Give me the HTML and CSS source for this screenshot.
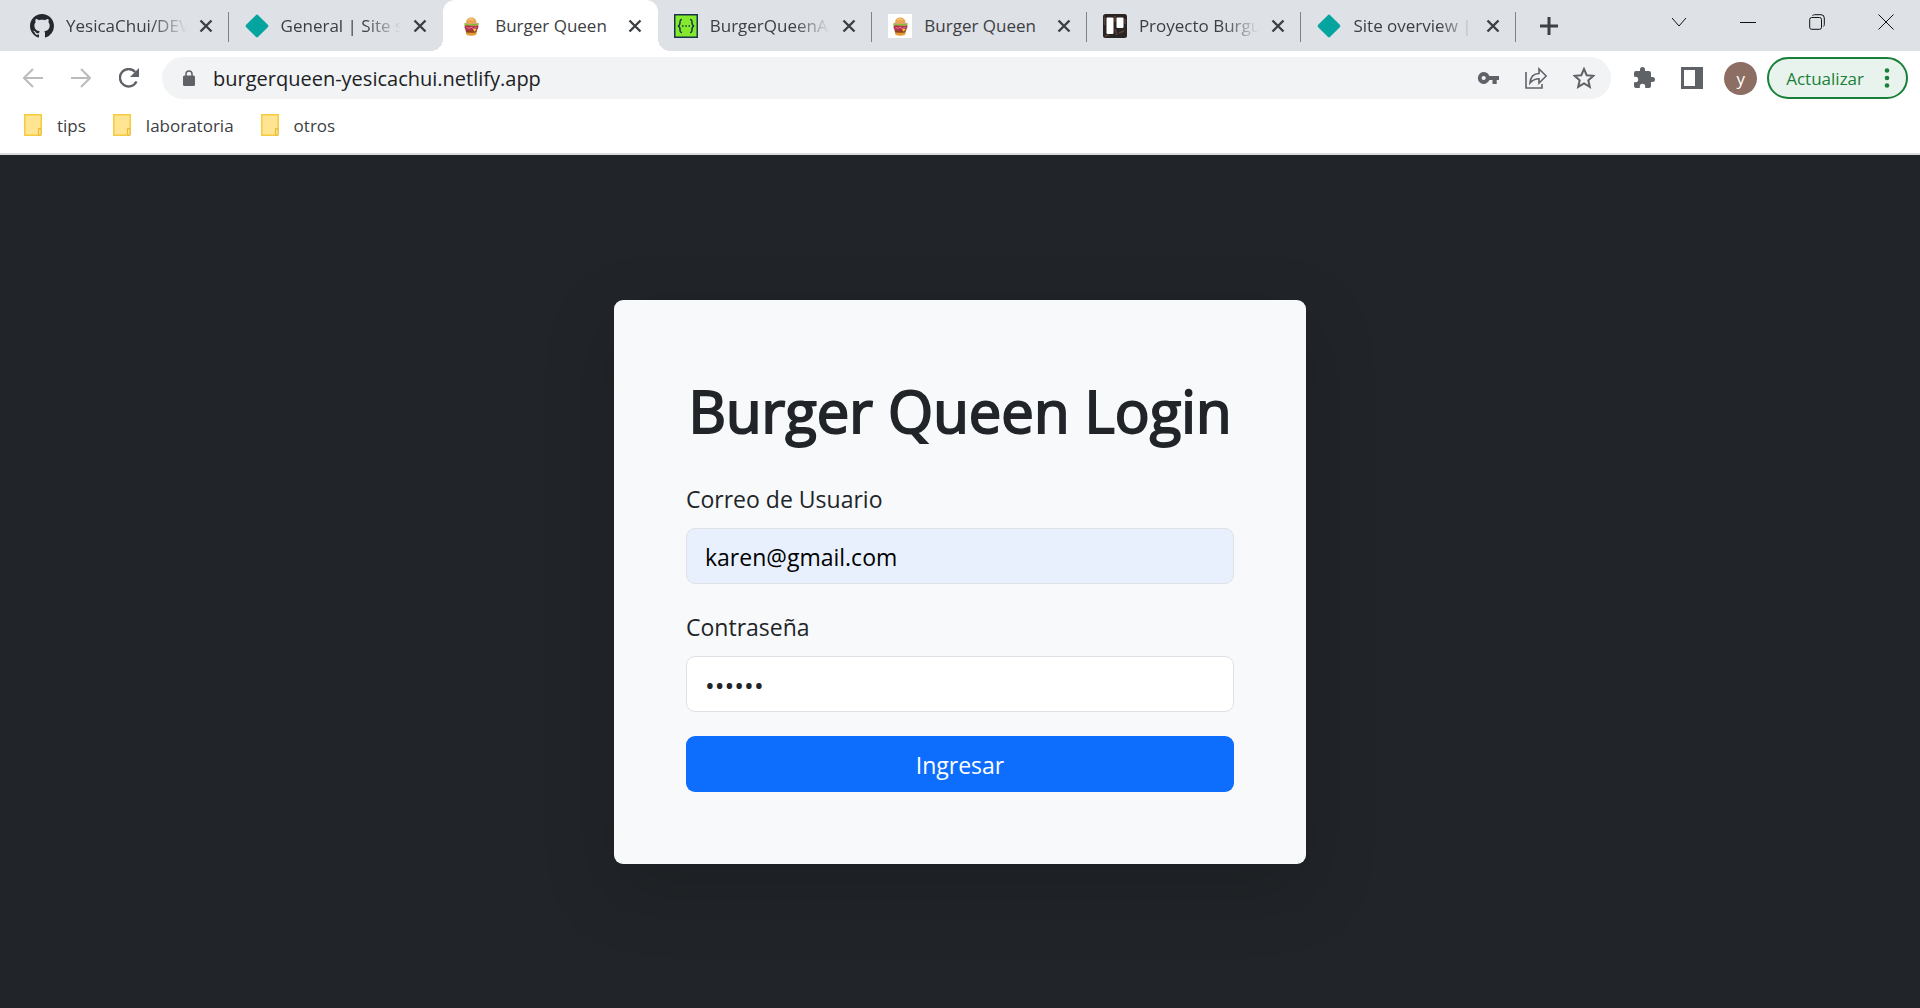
FILE: index.html
```html
<!DOCTYPE html>
<html lang="es">
<head>
<meta charset="utf-8">
<title>Burger Queen</title>
<meta name="viewport" content="width=device-width, initial-scale=1">
<link rel="stylesheet" href="styles.css">
</head>
<body>
<svg class="sprite" aria-hidden="true">
  <symbol id="close" viewBox="0 0 14 14"><path d="M1.5 1.5l11 11M12.500 1.500l-11 11" stroke="#3c4043" stroke-width="2.400" fill="none"/></symbol>
  <symbol id="netlify" viewBox="0 0 24 24"><path d="M10.800 1.200q1.200-1.200 2.400 0l9.600 9.600q1.200 1.200 0 2.400l-9.600 9.600q-1.200 1.200-2.400 0l-9.600-9.600q-1.200-1.200 0-2.400z" fill="#05a49f"/></symbol>
  <symbol id="burger" viewBox="0 0 24 24">
    <rect width="24" height="24" fill="#fff"/>
    <path d="M7 17.500h10.500v2q-.3 2.200-5.200 2.200t-5.300-2.200z" fill="#e59a35"/>
    <path d="M6.500 16h11.500l-.5 2.300q-5 1-10.500 0z" fill="#8f4517"/>
    <path d="M6 9.500h13l.5 3.500-1.500 3.500-11 .3-1.500-3z" fill="#b33350"/>
    <path d="M5.500 8.500l2 1.300 9.500.4 2.500-1.700v2.500l-2.500 1-9.500-.8-2 .8z" fill="#8cc53e"/>
    <path d="M7.500 13.200l2.500 1.300 2-1.300 2.500 1.300 3-1" stroke="#e87990" fill="none"/>
    <path d="M14 15h3.500l-1.700 2.800z" fill="#ffd42e"/>
    <path d="M7 8.700c0-6.800 10.500-6.800 10.500 0q-5.200 2-10.500 0z" fill="#e9a850"/>
    <path d="M9.500 6q3-2 5 0" stroke="#f9d58c" fill="none"/>
  </symbol>
  <symbol id="folder" viewBox="0 0 18 22"><path d="M.75.750h16.500v14.500h-2.500v6H.750z" fill="#ffe591" stroke="#f5cc41" stroke-width="1.500"/><rect x="14.500" y="14.500" width="2.750" height="6.750" rx="1" fill="#ffe591" stroke="#e9bd37" stroke-width="1.300"/></symbol>
</svg>

<header class="browser">
  <nav class="strip" aria-label="Pestañas">
    <div class="tabs">
      <div class="tab">
        <svg class="favicon" viewBox="0 0 16 16"><path fill="#24292f" d="M8 0C3.580 0 0 3.580 0 8c0 3.540 2.290 6.530 5.470 7.590.4.070.550-.170.550-.380 0-.190-.010-.820-.010-1.490-2.010.370-2.530-.490-2.690-.940-.090-.230-.480-.940-.820-1.130-.280-.150-.680-.520-.010-.530.630-.010 1.080.580 1.230.820.720 1.210 1.870.870 2.330.660.070-.520.280-.870.510-1.070-1.780-.200-3.640-.890-3.640-3.950 0-.870.310-1.590.820-2.150-.080-.200-.360-1.020.080-2.120 0 0 .670-.210 2.200.820.640-.180 1.320-.270 2-.270s1.360.090 2 .270c1.530-1.040 2.200-.820 2.200-.820.440 1.100.160 1.920.080 2.120.510.560.820 1.270.820 2.150 0 3.070-1.870 3.750-3.650 3.950.290.250.540.730.540 1.480 0 1.070-.010 1.930-.010 2.200 0 .210.150.460.550.380A8.010 8.010 0 0 0 16 8c0-4.420-3.580-8-8-8z"/></svg>
        <a class="title" href="#">YesicaChui/DEV005</a>
        <button class="close" aria-label="Cerrar"><svg><use href="#close"/></svg></button>
      </div>
      <div class="tab plain">
        <svg class="favicon"><use href="#netlify"/></svg>
        <a class="title" href="#">General | Site settings</a>
        <button class="close" aria-label="Cerrar"><svg><use href="#close"/></svg></button>
      </div>
      <div class="tab active">
        <svg class="favicon"><use href="#burger"/></svg>
        <a class="title whole" href="#">Burger Queen</a>
        <button class="close" aria-label="Cerrar"><svg><use href="#close"/></svg></button>
      </div>
      <div class="tab">
        <svg class="favicon" viewBox="0 0 24 24"><rect x=".75" y=".75" width="22.500" height="22.500" fill="#85ea2d" stroke="#173647" stroke-width="1.500"/><path d="M8 5.500c-2 0-2 1-2 3s0 3-2 3.500c2 .5 2 1.500 2 3.500s0 3 2 3M16 5.500c2 0 2 1 2 3s0 3 2 3.500c-2 .5-2 1.500-2 3.500s0 3-2 3M8 12h1.500M11.300 12h1.500M14.500 12h1.500" fill="none" stroke="#173647" stroke-width="1.500"/></svg>
        <a class="title" href="#">BurgerQueenAPI</a>
        <button class="close" aria-label="Cerrar"><svg><use href="#close"/></svg></button>
      </div>
      <div class="tab">
        <svg class="favicon"><use href="#burger"/></svg>
        <a class="title whole" href="#">Burger Queen</a>
        <button class="close" aria-label="Cerrar"><svg><use href="#close"/></svg></button>
      </div>
      <div class="tab">
        <svg class="favicon" viewBox="0 0 24 24"><rect width="24" height="24" rx="2.500" fill="#2a2423"/><path d="M2 22l4-1M12 2v6M21 17l-5 2M1.500 3v8M12 15l2 6M22 5v5" stroke="#5b4238" stroke-width="1.500"/><rect x="3.500" y="3.500" width="7" height="16.500" rx="1" fill="#fff"/><rect x="13.500" y="3.500" width="7" height="10.500" rx="1" fill="#fff"/></svg>
        <a class="title" href="#">Proyecto Burguer</a>
        <button class="close" aria-label="Cerrar"><svg><use href="#close"/></svg></button>
      </div>
      <div class="tab">
        <svg class="favicon"><use href="#netlify"/></svg>
        <a class="title" href="#">Site overview | burger</a>
        <button class="close" aria-label="Cerrar"><svg><use href="#close"/></svg></button>
      </div>
    </div>
    <button class="newtab" aria-label="Nueva pestaña"><svg viewBox="0 0 18 18"><path d="M9 0v18M0 9h18" stroke="#3c4043" stroke-width="3"/></svg></button>
    <div class="window">
      <button aria-label="Buscar pestañas"><svg viewBox="0 0 16 16"><path d="M1 4l7 8 7-8"/></svg></button>
      <button aria-label="Minimizar"><svg viewBox="0 0 16 16"><path d="M0 8.500h16"/></svg></button>
      <button aria-label="Restaurar"><svg viewBox="0 0 16 16"><rect x=".7" y="3.500" width="11.800" height="11.800" rx="2"/><path d="M3.500 1.700Q4 .7 5.500.700H12q3.300 0 3.300 3.300v6.500q0 1.500-1 2"/></svg></button>
      <button aria-label="Cerrar ventana"><svg viewBox="0 0 16 16"><path d="M.5.500l15 15M15.500.500l-15 15"/></svg></button>
    </div>
  </nav>

  <div class="toolbar">
    <div class="navigation">
      <button aria-label="Atrás"><svg viewBox="0 0 20 20"><path d="M20 10H1.500M10 1L1 10l9 9" fill="none" stroke="#b9bbbd" stroke-width="2"/></svg></button>
      <button aria-label="Adelante"><svg viewBox="0 0 20 20"><path d="M0 10h18.500M10 1l9 9-9 9" fill="none" stroke="#b9bbbd" stroke-width="2"/></svg></button>
      <button aria-label="Recargar"><svg viewBox="0 0 20 20"><path d="M17.500 13.500a8.700 8.700 0 1 1-1.300-9.500" fill="none" stroke="#5f6368" stroke-width="2.400"/><path d="M20 0v9h-9z" fill="#5f6368"/></svg></button>
    </div>
    <div class="omnibox">
      <svg class="lock" viewBox="0 0 12 16"><path d="M3 7V4a3 3 0 0 1 6 0v3" fill="none" stroke="#5f6368" stroke-width="1.500"/><rect y="5.500" width="12" height="10.500" rx="1.500" fill="#5f6368"/></svg>
      <input class="url" type="text" aria-label="Dirección" value="burgerqueen-yesicachui.netlify.app">
      <button aria-label="Contraseñas"><svg viewBox="0 0 22 22"><path d="M12.400 8.900A6 6 0 1 0 12.400 13.100h3.100v4h4.200v-4H22V8.900zM6.700 13.100a2.100 2.100 0 1 1 0-4.200 2.100 2.100 0 0 1 0 4.200z" fill="#5f6368"/></svg></button>
      <button aria-label="Compartir"><svg viewBox="0 0 22 22"><path d="M1 5v16h16v-4" fill="none" stroke="#5f6368" stroke-width="1.600"/><path d="M5 16c.5-6 3.500-9.500 9-9.500V2l7.200 7-7.200 7v-4.300c-4 0-6.500 1.300-9 4.300z" fill="none" stroke="#5f6368" stroke-width="1.600"/></svg></button>
      <button aria-label="Favoritos"><svg viewBox="0 0 22 22"><path d="M11 2l2.700 6.200 6.700.6-5.100 4.500 1.500 6.600L11 16.400l-5.800 3.500 1.500-6.600L1.600 8.800l6.700-.6z" fill="none" stroke="#5f6368" stroke-width="2"/></svg></button>
    </div>
    <div class="actions">
      <button aria-label="Extensiones"><svg viewBox="1 1 22 22"><path d="M20.500 11H19V7a2 2 0 0 0-2-2h-4V3.500a2.500 2.500 0 0 0-5 0V5H4a2 2 0 0 0-2 2v3.800h1.500a2.700 2.700 0 0 1 0 5.400H2V20a2 2 0 0 0 2 2h3.800v-1.500a2.700 2.700 0 0 1 5.400 0V22H17a2 2 0 0 0 2-2v-4h1.500a2.500 2.500 0 0 0 0-5z" fill="#5f6368"/></svg></button>
      <button aria-label="Panel lateral"><svg viewBox="0 0 22 22"><path d="M0 0h22v22H0zM3 3v16h11V3z" fill="#5f6368" fill-rule="evenodd"/></svg></button>
      <button class="avatar">y</button>
    </div>
    <button class="update">Actualizar<svg viewBox="0 0 6 20"><g fill="#188038"><circle cx="3" cy="2.500" r="2.300"/><circle cx="3" cy="10" r="2.300"/><circle cx="3" cy="17.500" r="2.300"/></g></svg></button>
  </div>

  <nav class="bookmarks" aria-label="Marcadores">
    <a href="#"><svg><use href="#folder"/></svg>tips</a>
    <a href="#"><svg><use href="#folder"/></svg>laboratoria</a>
    <a href="#"><svg><use href="#folder"/></svg>otros</a>
  </nav>
</header>

<main class="page">
  <form class="card">
    <h1>Burger Queen Login</h1>
    <label for="email">Correo de Usuario</label>
    <input class="field filled" id="email" type="email" value="karen@gmail.com">
    <label for="password">Contraseña</label>
    <input class="field secret" id="password" type="password" value="123456">
    <button class="submit" type="button">Ingresar</button>
  </form>
</main>
</body>
</html>
```
FILE: styles.css
```css
* { box-sizing: border-box; }

body {
  margin: 0;
  min-height: 100vh;
  display: flex;
  flex-direction: column;
  font-family: "Open Sans", "Noto Sans", sans-serif;
  color: #212529;
  background: #212529;
}

button {
  display: flex;
  align-items: center;
  justify-content: center;
  padding: 0;
  border: 0;
  background: none;
  font: inherit;
  color: inherit;
}

input { font: inherit; color: inherit; }
a { color: inherit; text-decoration: none; }
svg { display: block; flex: none; }
.sprite { display: none; }

.browser {
  background: #fff;
  border-bottom: 2px solid #d9dbdc;
  color: #3c4043;
  font-size: 17px;
}

/* Tab strip */
.strip {
  display: flex;
  height: 51px;
  padding-left: 14px;
  background: #dee1e6;
}

.tabs {
  display: flex;
  flex: 0 1 1502px;
  min-width: 0;
}

.tab {
  position: relative;
  display: flex;
  align-items: center;
  flex: 1;
  min-width: 0;
  padding: 0 16px;
}

.tab::after {
  content: "";
  position: absolute;
  right: 0;
  top: 12px;
  width: 1px;
  height: 30px;
  background: #808488;
}

.tab.plain::after { display: none; }
.favicon { width: 24px; height: 24px; }

.title {
  flex: 1;
  min-width: 0;
  margin: 0 12px;
  overflow: hidden;
  white-space: nowrap;
  mask-image: linear-gradient(to right, #000 calc(100% - 36px), transparent);
}

.title.whole { mask-image: none; }
.close svg { width: 14px; height: 14px; }

.active {
  background: #fff;
  border-radius: 12px 12px 0 0;
}

.active::before,
.active::after {
  content: "";
  position: absolute;
  top: auto;
  bottom: 0;
  width: 12px;
  height: 12px;
}

.active::before {
  left: -12px;
  background: radial-gradient(circle at 0 0, #dee1e6 12px, #fff 12px);
}

.active::after {
  right: -12px;
  background: radial-gradient(circle at 100% 0, #dee1e6 12px, #fff 12px);
}

.newtab { width: 66px; }
.newtab svg { width: 18px; height: 18px; }

.window {
  display: flex;
  height: 43px;
  margin-left: auto;
}

.window button { width: 69px; }

.window svg {
  width: 16px;
  height: 16px;
  fill: none;
  stroke: #111;
  stroke-width: 1;
}

/* Toolbar */
.toolbar {
  display: flex;
  align-items: center;
  height: 54px;
  padding: 0 12px 0 9px;
}

.navigation { display: flex; }
.navigation button { width: 48px; height: 42px; }
.navigation svg { width: 20px; height: 20px; }

.omnibox {
  display: flex;
  align-items: center;
  flex: 1;
  min-width: 0;
  height: 42px;
  margin-left: 9px;
  padding: 0 3px 0 21px;
  border-radius: 21px;
  background: #f1f3f4;
}

.lock { width: 12px; height: 16px; }

.url {
  flex: 1;
  min-width: 0;
  margin-left: 18px;
  padding: 0;
  border: 0;
  outline: 0;
  background: none;
  color: #202124;
  font-size: 20px;
}

.omnibox button,
.actions button { width: 48px; }

.omnibox button svg,
.actions svg { width: 22px; height: 22px; }

.actions {
  display: flex;
  align-items: center;
  margin-left: 9px;
}

.actions .avatar {
  width: 33px;
  height: 33px;
  margin: 0 8px;
  border-radius: 50%;
  background: #8d6e63;
  color: #fff;
}

.update {
  gap: 20px;
  height: 42px;
  margin-left: 2px;
  padding: 0 16px 0 17px;
  border: 2px solid #188038;
  border-radius: 21px;
  background: #e9f3ed;
  color: #188038;
}

.update svg { width: 6px; height: 20px; }

/* Bookmarks bar */
.bookmarks {
  display: flex;
  gap: 27px;
  height: 48px;
  padding: 0 24px 8px;
}

.bookmarks a {
  display: flex;
  align-items: center;
  gap: 15px;
}

.bookmarks svg { width: 18px; height: 22px; }

/* Login page */
.page {
  display: flex;
  flex: 1;
  align-items: center;
  justify-content: center;
  padding: 24px;
}

.card {
  display: flex;
  flex-direction: column;
  width: 100%;
  max-width: 692px;
  padding: 72px;
  border-radius: 9px;
  background: #f8f9fa;
  box-shadow: 0 24px 72px rgba(0, 0, 0, .175);
  font-size: 23px;
  line-height: 38px;
}

/* The thin stroke gives the heading a medium weight */
h1 {
  margin: 0 0 30px;
  font-size: 58px;
  font-weight: 400;
  line-height: 78px;
  text-align: center;
  white-space: nowrap;
  -webkit-text-stroke: 2px #212529;
}

label { margin-bottom: 10px; }

.field {
  width: 100%;
  height: 56px;
  margin-bottom: 24px;
  padding: 2px 18px 0;
  border: 1px solid #dee2e6;
  border-radius: 9px;
  background: #fff;
}

.filled {
  background: #e8f0fe;
  color: #000;
}

.secret { font-size: 26px; }

.submit {
  height: 56px;
  padding-top: 2px;
  border-radius: 9px;
  background: #0d6efd;
  color: #fff;
}
```
